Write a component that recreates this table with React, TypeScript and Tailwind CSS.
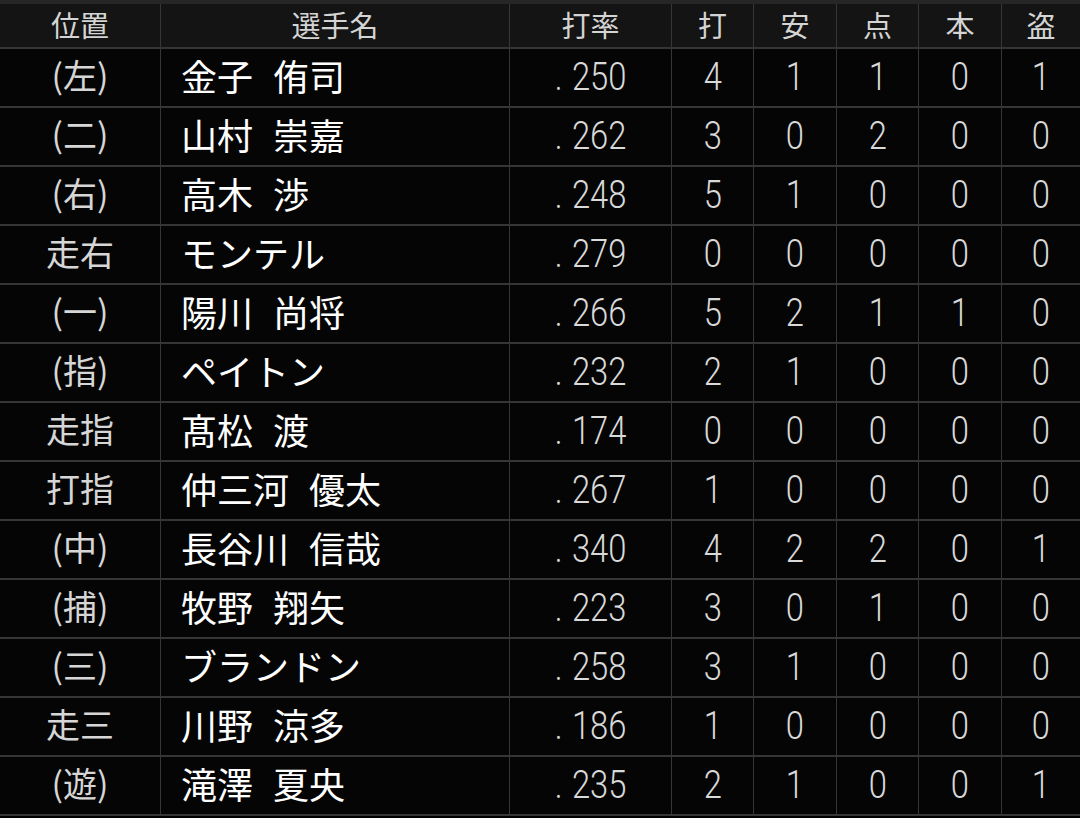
import React from "react";

interface Batter {
  pos: string;
  name: string[];
  avg: string;
  ab: number;
  h: number;
  rbi: number;
  hr: number;
  sb: number;
}

const HEADERS = ["位置", "選手名", "打率", "打", "安", "点", "本", "盗"];

const batters: Batter[] = [
  { pos: "(左)", name: ["金子", "侑司"], avg: "250", ab: 4, h: 1, rbi: 1, hr: 0, sb: 1 },
  { pos: "(二)", name: ["山村", "崇嘉"], avg: "262", ab: 3, h: 0, rbi: 2, hr: 0, sb: 0 },
  { pos: "(右)", name: ["高木", "渉"], avg: "248", ab: 5, h: 1, rbi: 0, hr: 0, sb: 0 },
  { pos: "走右", name: ["モンテル"], avg: "279", ab: 0, h: 0, rbi: 0, hr: 0, sb: 0 },
  { pos: "(一)", name: ["陽川", "尚将"], avg: "266", ab: 5, h: 2, rbi: 1, hr: 1, sb: 0 },
  { pos: "(指)", name: ["ペイトン"], avg: "232", ab: 2, h: 1, rbi: 0, hr: 0, sb: 0 },
  { pos: "走指", name: ["髙松", "渡"], avg: "174", ab: 0, h: 0, rbi: 0, hr: 0, sb: 0 },
  { pos: "打指", name: ["仲三河", "優太"], avg: "267", ab: 1, h: 0, rbi: 0, hr: 0, sb: 0 },
  { pos: "(中)", name: ["長谷川", "信哉"], avg: "340", ab: 4, h: 2, rbi: 2, hr: 0, sb: 1 },
  { pos: "(捕)", name: ["牧野", "翔矢"], avg: "223", ab: 3, h: 0, rbi: 1, hr: 0, sb: 0 },
  { pos: "(三)", name: ["ブランドン"], avg: "258", ab: 3, h: 1, rbi: 0, hr: 0, sb: 0 },
  { pos: "走三", name: ["川野", "涼多"], avg: "186", ab: 1, h: 0, rbi: 0, hr: 0, sb: 0 },
  { pos: "(遊)", name: ["滝澤", "夏央"], avg: "235", ab: 2, h: 1, rbi: 0, hr: 0, sb: 1 },
];

const cjk = "font-['Noto_Sans_CJK_JP',sans-serif]";
const num = "font-['Roboto','Noto_Sans',sans-serif]";

const Num = ({ children }: { children: React.ReactNode }) => (
  <span className={`inline-block ${num} font-light text-[39px] leading-none scale-x-[0.84] text-[#d9d9d9]`}>
    {children}
  </span>
);

const App = () => {
  return (
    <div className="w-[1080px] h-[818px] bg-black overflow-hidden">
      <div className="h-[4px] bg-[#262626]" />
      <div className="grid grid-cols-[160px_348px_161px_81px_82px_81px_82px_1fr] gap-x-[1px] gap-y-[2px] bg-[#363636] pb-[2px]">
        {HEADERS.map((h) => (
          <div
            key={h}
            className={`h-[43px] pb-[3px] bg-[#141414] flex items-center justify-center ${cjk} text-[29px] leading-none text-[#d4d4d4]`}
          >
            {h}
          </div>
        ))}
        {batters.map((b, i) => (
          <React.Fragment key={i}>
            <div className={`h-[57px] pb-[5px] bg-[#050505] flex items-center justify-center ${cjk} text-[34px] leading-none text-[#d6d6d6]`}>
              {b.pos}
            </div>
            <div className={`h-[57px] pb-[5px] bg-[#050505] flex items-center pl-[20px] ${cjk} font-normal text-[36px] leading-none text-white`}>
              <span>{b.name[0]}</span>
              {b.name[1] && <span className="ml-[20px]">{b.name[1]}</span>}
            </div>
            <div className="h-[57px] bg-[#050505] flex items-center justify-center">
              <Num>
                <span className="mr-[11px]">.</span>
                {b.avg}
              </Num>
            </div>
            {[b.ab, b.h, b.rbi, b.hr, b.sb].map((v, j) => (
              <div key={j} className="h-[57px] bg-[#050505] flex items-center justify-center">
                <Num>{v}</Num>
              </div>
            ))}
          </React.Fragment>
        ))}
      </div>
    </div>
  );
};

export default App;
